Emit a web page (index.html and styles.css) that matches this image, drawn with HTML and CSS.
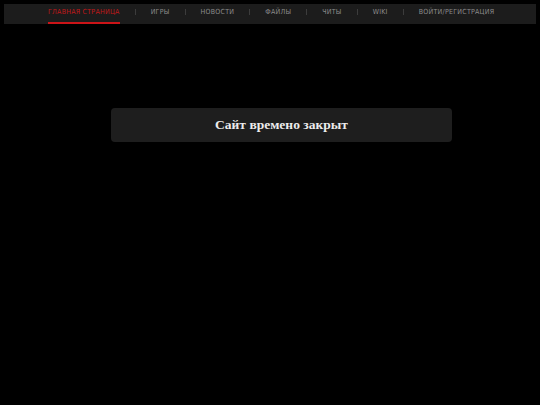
FILE: index.html
```html
<!DOCTYPE html>
<html lang="ru">
<head>
<meta charset="utf-8">
<title>Сайт времено закрыт</title>
<link rel="stylesheet" href="styles.css">
</head>
<body>
<nav class="nav">
  <ul class="menu">
    <li class="item active"><a href="#">Главная страница</a></li>
    <li class="sep"></li>
    <li class="item"><a href="#">Игры</a></li>
    <li class="sep"></li>
    <li class="item"><a href="#">Новости</a></li>
    <li class="sep"></li>
    <li class="item"><a href="#">Файлы</a></li>
    <li class="sep"></li>
    <li class="item"><a href="#">Читы</a></li>
    <li class="sep"></li>
    <li class="item"><a href="#">Wiki</a></li>
    <li class="sep"></li>
    <li class="item"><a href="#">Войти/Регистрация</a></li>
  </ul>
</nav>
<main class="main">
  <div class="notice">Сайт времено закрыт</div>
</main>
</body>
</html>
```
FILE: styles.css
```css
html, body {
  margin: 0;
  padding: 0;
  background: #000;
}
body {
  padding: 4px;
  font-family: "DejaVu Sans Condensed", "DejaVu Sans", sans-serif;
}
.nav {
  height: 20px;
  background: #1c1c1c;
}
.menu {
  list-style: none;
  margin: 0;
  padding: 0 0 0 44px;
  display: flex;
  align-items: stretch;
  height: 20px;
}
.item {
  display: flex;
  align-items: stretch;
}
.item a {
  display: flex;
  align-items: center;
  padding-bottom: 2px;
  color: #8c8c8c;
  text-decoration: none;
  text-transform: uppercase;
  font-size: 7px;
  letter-spacing: 0.25px;
  border-bottom: 2px solid transparent;
  box-sizing: border-box;
  height: 20px;
}
.item.active a {
  color: #c0181a;
  border-bottom-color: #cc1418;
}
.sep {
  width: 1px;
  height: 6px;
  align-self: center;
  margin: 0 15px;
  background: #3c3c3c;
  margin-top: -4px;
}
.main {
  display: flex;
  justify-content: center;
  padding-top: 84px;
  padding-left: 25px;
  padding-right: 2px;
}
.notice {
  width: 341px;
  height: 34px;
  box-sizing: border-box;
  background: #1e1e1e;
  border-radius: 4px;
  display: flex;
  align-items: center;
  justify-content: center;
  color: #ececec;
  font-family: "Liberation Serif", serif;
  font-weight: bold;
  font-size: 13.5px;
}
```
